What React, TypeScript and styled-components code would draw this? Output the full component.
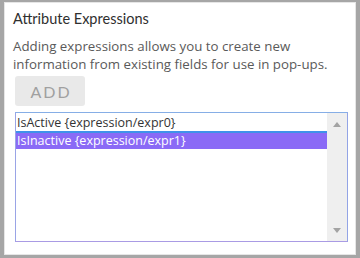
import styled, { createGlobalStyle } from 'styled-components'

const GlobalStyle = createGlobalStyle`
  html, body {
    margin: 0;
    padding: 0;
    background: #a6a6a6;
  }
  body {
    font-family: "Open Sans", Lato, sans-serif;
  }
`

const Frame = styled.div`
  width: 360px;
  height: 258px;
  box-sizing: border-box;
  padding: 2px 4px 3px 4px;
  background: #a6a6a6;
`

const Panel = styled.section`
  height: 100%;
  box-sizing: border-box;
  background: #fff;
  border: 1px solid #e6e6e6;
  padding: 6px 8px 0 8px;
`

const Title = styled.h3`
  margin: 0;
  font-family: Lato, "Open Sans", sans-serif;
  font-size: 14.5px;
  font-weight: 400;
  color: #2f2f2f;
  line-height: 20px;
`

const Description = styled.p`
  margin: 8px 0 0 0;
  font-size: 13.3px;
  line-height: 18px;
  color: #5a5a5a;
  white-space: nowrap;
`

const AddButton = styled.button`
  display: block;
  margin: 3px 0 0 2px;
  width: 70px;
  height: 30px;
  padding: 0;
  border: none;
  border-radius: 3px;
  background: #e9e9e9;
  color: #a0a0a0;
  font-family: Lato, "Open Sans", sans-serif;
  font-size: 16px;
  letter-spacing: 2px;
  text-indent: 2px;
`

const ListBox = styled.div`
  margin: 6px 0 0 2px;
  width: 333px;
  height: 130px;
  box-sizing: border-box;
  border: 1px solid;
  border-color: #86aee6 #93a4e6 #a99be4 #9aa4e6;
  display: flex;
`

const Items = styled.ul`
  flex: 1;
  margin: 0;
  padding: 0;
  list-style: none;
`

const Item = styled.li<{ $selected?: boolean }>`
  height: 18px;
  box-sizing: border-box;
  padding-left: 1px;
  font-size: 12.5px;
  line-height: 16px;
  white-space: nowrap;
  color: ${(p) => (p.$selected ? '#fff' : '#333')};
  background: ${(p) => (p.$selected ? '#8a6af6' : 'transparent')};
  border-top: 2px solid ${(p) => (p.$selected ? '#3f92ea' : 'transparent')};
`

const Scrollbar = styled.div`
  width: 20px;
  background: #efefef;
  display: flex;
  flex-direction: column;
  justify-content: space-between;
  align-items: center;
  padding: 9px 0 8px 0;
`

const Arrow = styled.span<{ $down?: boolean }>`
  width: 0;
  height: 0;
  border-left: 4.5px solid transparent;
  border-right: 4.5px solid transparent;
  ${(p) =>
    p.$down ? 'border-top: 5px solid #a3a3a3;' : 'border-bottom: 5px solid #a3a3a3;'}
`

export default function App() {
  return (
    <Frame>
      <GlobalStyle />
      <Panel>
        <Title>Attribute Expressions</Title>
        <Description>
          Adding expressions allows you to create new
          <br />
          information from existing fields for use in pop-ups.
        </Description>
        <AddButton>ADD</AddButton>
        <ListBox>
          <Items>
            <Item>IsActive {'{expression/expr0}'}</Item>
            <Item $selected>IsInactive {'{expression/expr1}'}</Item>
          </Items>
          <Scrollbar>
            <Arrow />
            <Arrow $down />
          </Scrollbar>
        </ListBox>
      </Panel>
    </Frame>
  )
}
